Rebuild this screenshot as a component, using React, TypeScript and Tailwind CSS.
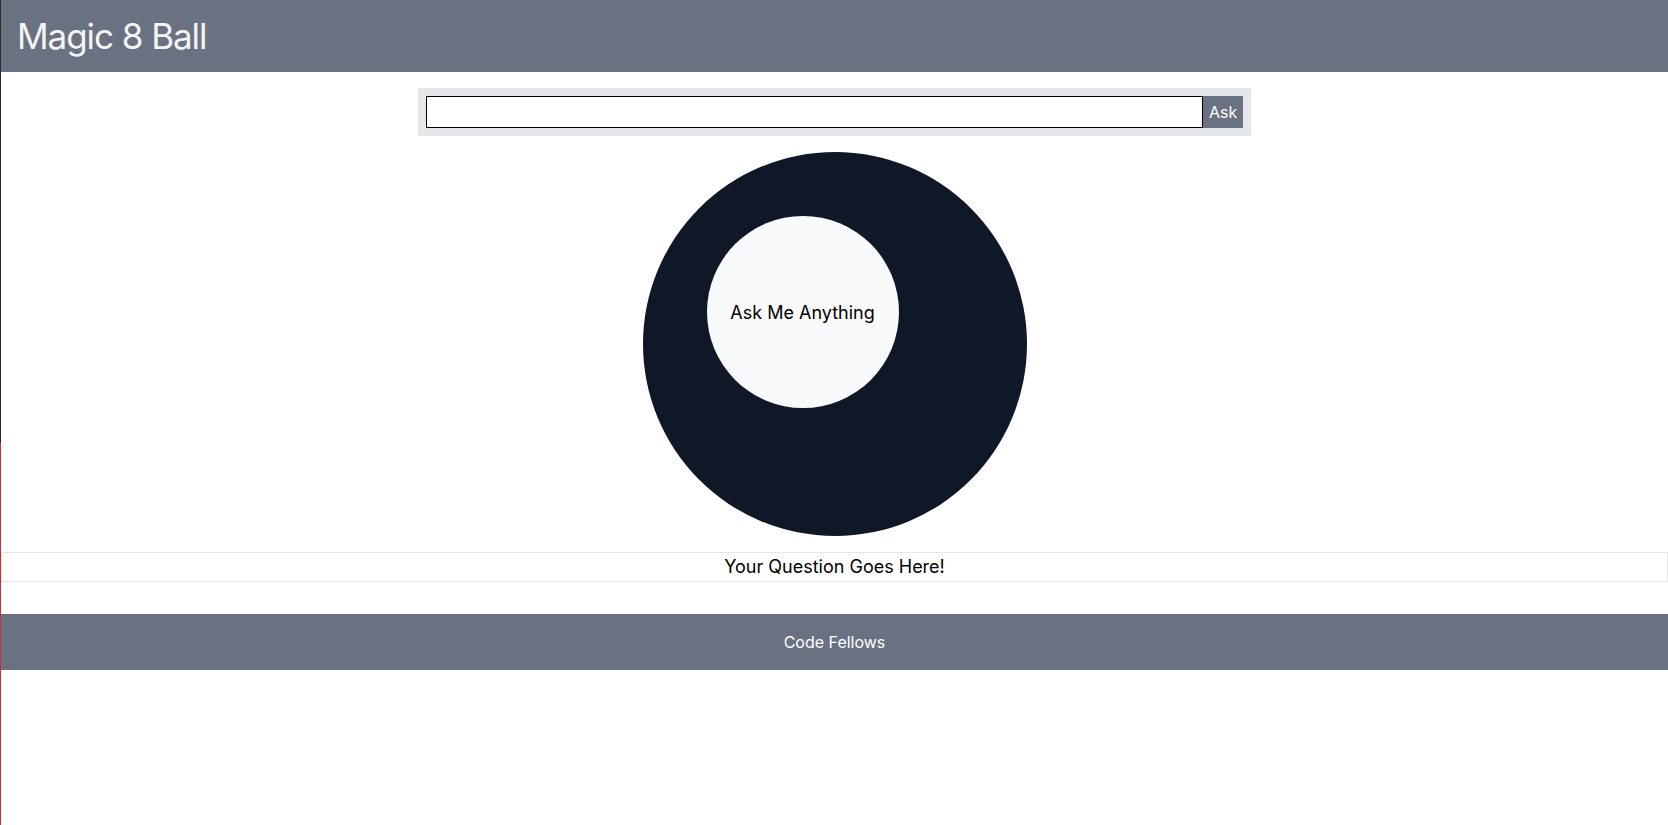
import React from "react";

export default function App() {
  return (
    <div className="flex min-h-[825px] bg-white font-['Inter','Noto_Sans',sans-serif] text-black">
      <div className="flex w-px flex-col">
        <div className="h-[443px] bg-[#2b2b2b]" />
        <div className="flex-1 bg-[#c8323a]" />
      </div>
      <div className="flex-1">
        <header className="bg-gray-500 px-4 py-4">
          <h1 className="text-[35px] leading-10 tracking-[-0.03em] text-gray-100">Magic 8 Ball</h1>
        </header>
        <main className="flex flex-col items-center">
          <form
            className="mt-4 flex w-1/2 bg-gray-200 p-2"
            onSubmit={(e) => e.preventDefault()}
          >
            <input
              type="text"
              className="h-8 flex-1 border border-black bg-white px-1 outline-none"
            />
            <button type="submit" className="h-8 bg-gray-500 px-[6px] text-base text-white">
              Ask
            </button>
          </form>
          <div className="mt-4 h-96 w-96 rounded-full bg-gray-900 p-16">
            <div className="flex h-48 w-48 items-center justify-center rounded-full bg-gray-50 pt-[2px] text-lg">
              Ask Me Anything
            </div>
          </div>
        </main>
        <div className="mt-4 border border-gray-200 text-center text-lg leading-7">
          Your Question Goes Here!
        </div>
        <footer className="mt-8 bg-gray-500 py-4 text-center text-base text-white">
          Code Fellows
        </footer>
      </div>
    </div>
  );
}
